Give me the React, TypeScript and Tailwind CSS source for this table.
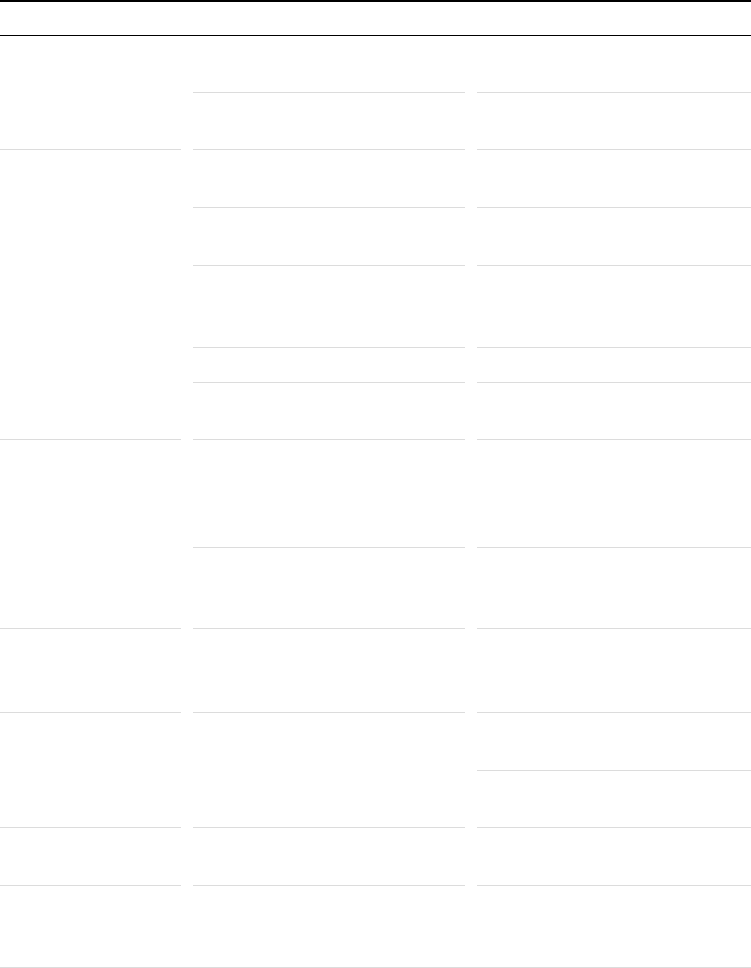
// Empty comparison table: only the rule lines are visible.
type Group = {
  cols: [number[], number[], number[]];
  last?: boolean;
};

const groups: Group[] = [
  { cols: [[114], [57, 57], [57, 57]] },
  { cols: [[290], [58, 58, 82, 35, 57], [58, 58, 82, 35, 57]] },
  { cols: [[189], [108, 81], [108, 81]] },
  { cols: [[84], [84], [84]] },
  { cols: [[115], [115], [58, 57]] },
  { cols: [[58], [58], [58]] },
  { cols: [[82], [82], [82]], last: true },
];

const Cell = ({ h, last }: { h: number; last?: boolean }) => {
  return (
    <div
      className={last ? "" : "border-b border-[#dcdcdc]"}
      style={{ height: h }}
    ></div>
  );
};

const App = () => {
  return (
    <div className="w-[751px] bg-white font-['Liberation_Sans',sans-serif] text-sm text-gray-900">
      <div className="grid grid-cols-[181px_272px_1fr] gap-x-3 border-t-2 border-b border-black h-[36px]">
        <div></div>
        <div></div>
        <div></div>
      </div>
      <div className="flex flex-col border-b border-[#dcdcdc]">
        {groups.map((g, i) => (
          <div key={i} className="grid grid-cols-[181px_272px_1fr] gap-x-3">
            {g.cols.map((col, j) => (
              <div key={j} className="flex flex-col">
                {col.map((h, k) => (
                  <Cell key={k} h={g.last ? h - 1 : h} last={g.last} />
                ))}
              </div>
            ))}
          </div>
        ))}
      </div>
    </div>
  );
};

export default App;
